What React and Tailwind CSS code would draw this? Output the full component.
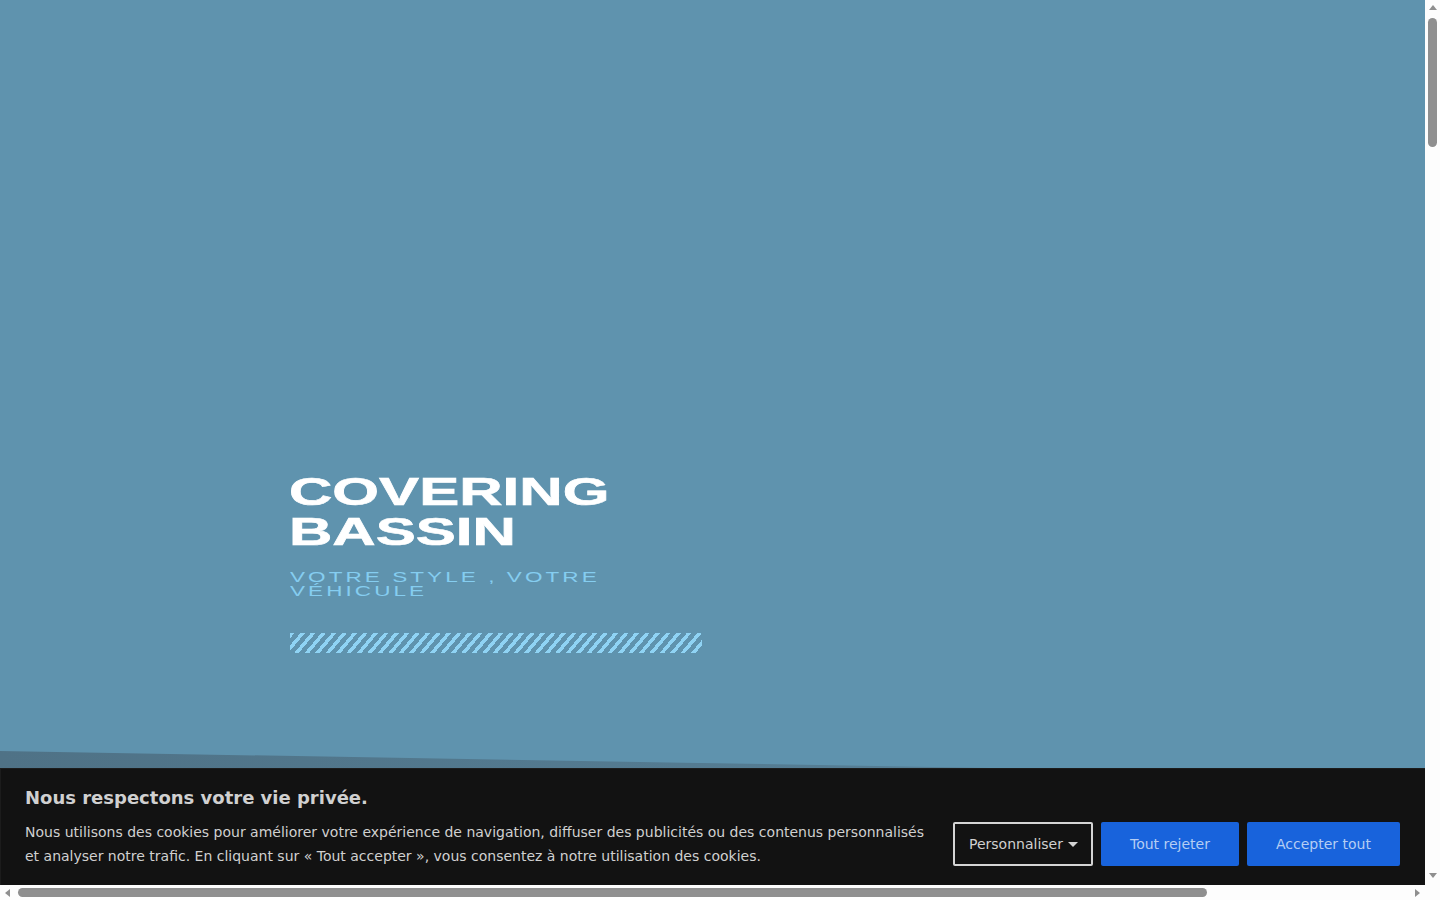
import React from 'react';

const sans = "font-['DejaVu_Sans',sans-serif]";

const App = () => {
    return (
        <div className={`h-screen w-full overflow-hidden flex flex-col bg-white ${sans}`}>
            <div className="flex flex-1 min-h-0">
                <div className="flex-1 flex flex-col min-w-0">
                    {/* Hero */}
                    <div className="relative flex-1 bg-[#5f93ae] flex flex-col justify-end pl-[290px] pb-[115px]">
                        <h1 className="w-[412px] -ml-px origin-left scale-x-[1.54] font-['Liberation_Sans',sans-serif] font-bold text-[39px] leading-[40px] text-white [-webkit-text-stroke:0.6px_white]">
                            COVERING
                            <br />
                            BASSIN
                        </h1>
                        <p className="mt-[18px] whitespace-nowrap origin-left scale-x-[1.5] font-['Liberation_Sans',sans-serif] text-[15px] leading-[14px] tracking-[2.05px] text-[#85cdf0]">
                            VOTRE STYLE , VOTRE
                            <br />
                            VÉHICULE
                        </p>
                        <div className="mt-[35px] h-5 w-[412px] bg-[repeating-linear-gradient(130deg,#8fd3f4_0px,#8fd3f4_3.5px,transparent_3.5px,transparent_8px)]" />

                        <svg className="absolute left-0 bottom-0" width="990" height="17" viewBox="0 0 990 17">
                            <defs>
                                <linearGradient id="wedge" x1="0" y1="0" x2="1" y2="0">
                                    <stop offset="0" stopColor="#4f7286" />
                                    <stop offset="1" stopColor="#567f96" />
                                </linearGradient>
                            </defs>
                            <polygon points="0,0 990,17 0,17" fill="url(#wedge)" />
                        </svg>
                    </div>

                    {/* Cookie banner */}
                    <div className="h-[117px] shrink-0 bg-[#121212] border-t border-l border-[#1c1c1c] pl-6 pr-[25px] pt-[17px] text-[#d0d0d0]">
                        <h2 className="text-lg leading-[24px] font-bold">Nous respectons votre vie privée.</h2>
                        <div className="flex items-start justify-between mt-[10px]">
                            <p className="w-[915px] text-sm leading-6">
                                Nous utilisons des cookies pour améliorer votre expérience de navigation, diffuser des publicités ou des contenus personnalisés et analyser notre trafic. En cliquant sur « Tout accepter », vous consentez à notre utilisation des cookies.
                            </p>
                            <div className="flex gap-2 mt-[2px]">
                                <button className="h-11 w-[140px] flex items-center justify-center gap-[5px] pl-[1px] border-2 border-[#d4d4d4] rounded-[2px] text-sm text-[#d0d0d0]">
                                    Personnaliser
                                    <span className="mt-[1px] border-x-[5px] border-t-[5px] border-x-transparent border-t-[#d4d4d4]" />
                                </button>
                                <button className="h-11 w-[138px] bg-[#1863dc] rounded-[2px] text-sm text-[#b5cdf3]">Tout rejeter</button>
                                <button className="h-11 w-[153px] bg-[#1863dc] rounded-[2px] text-sm text-[#b5cdf3]">Accepter tout</button>
                            </div>
                        </div>
                    </div>
                </div>

                {/* Vertical scrollbar */}
                <div className="w-[15px] shrink-0 flex flex-col items-center bg-[#fdfdfd] pt-[5px] pb-[7px]">
                    <span className="border-x-[4.5px] border-b-[5px] border-x-transparent border-b-[#8f8f8f]" />
                    <div className="mt-2 w-[9px] h-[129px] rounded-full bg-[#8f8f8f]" />
                    <span className="mt-auto border-x-[4.5px] border-t-[5px] border-x-transparent border-t-[#8f8f8f]" />
                </div>
            </div>

            {/* Horizontal scrollbar */}
            <div className="h-[15px] shrink-0 flex items-center bg-[#fdfdfd] pl-[5px] pr-[20px]">
                <span className="border-y-[4.5px] border-r-[5px] border-y-transparent border-r-[#8f8f8f]" />
                <div className="ml-2 w-[1189px] h-[9px] rounded-full bg-[#8f8f8f]" />
                <span className="ml-auto border-y-[4.5px] border-l-[5px] border-y-transparent border-l-[#8f8f8f]" />
            </div>
        </div>
    );
};

export default App;
